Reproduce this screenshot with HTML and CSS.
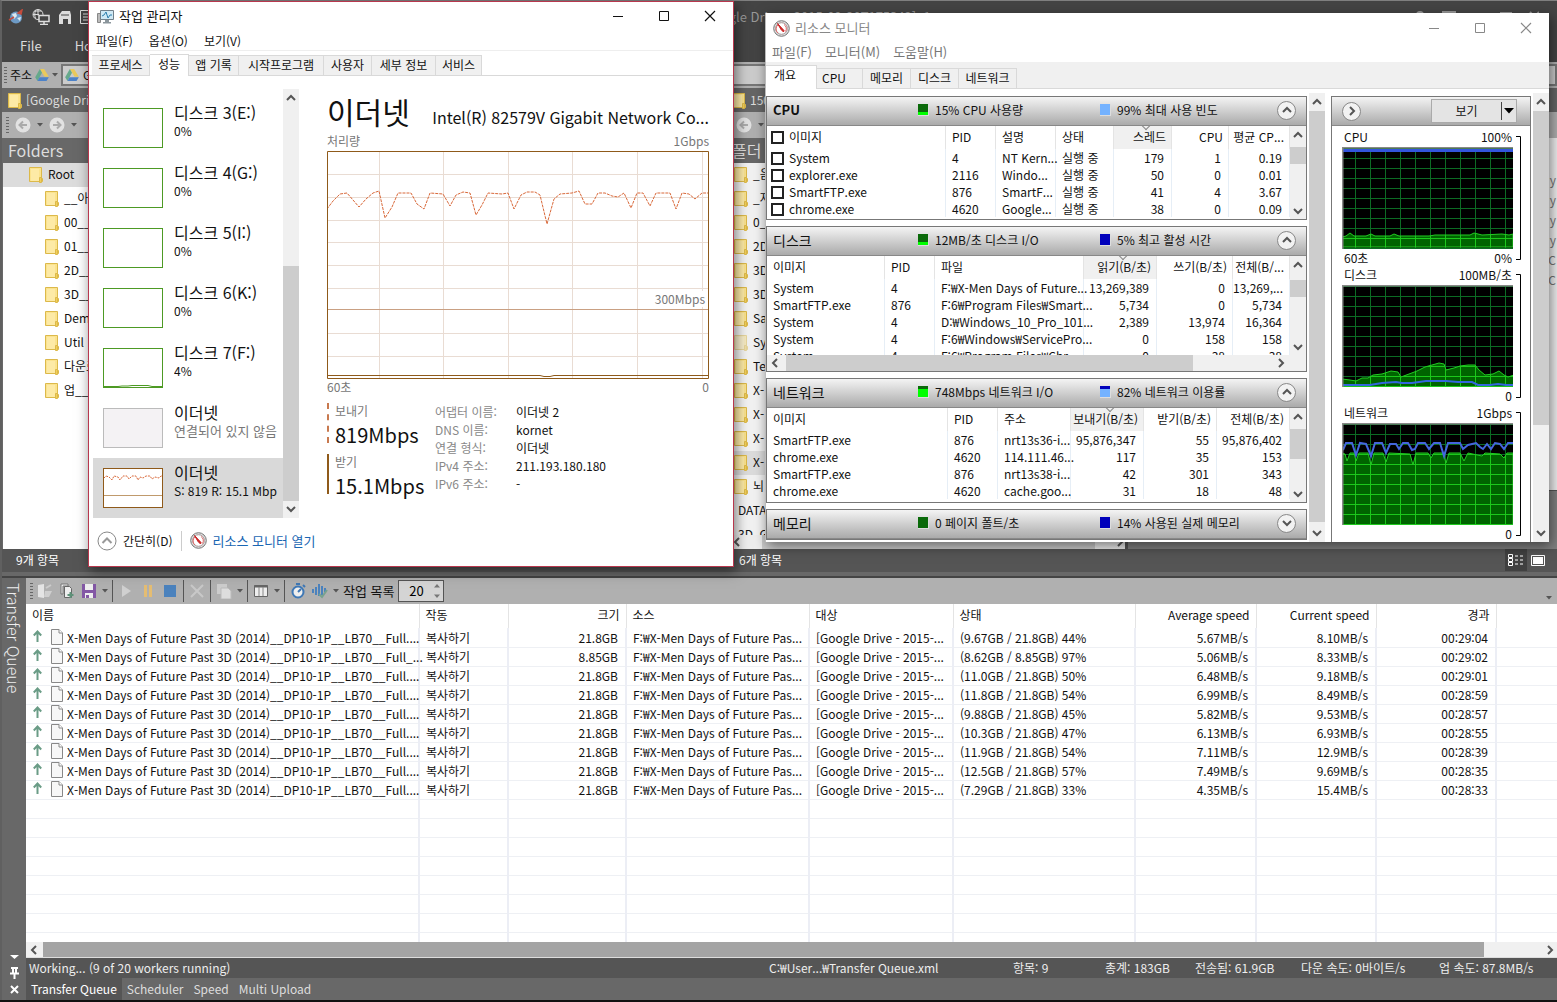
FILE: index.html
```html
<!DOCTYPE html>
<html lang="ko">
<head>
<meta charset="utf-8">
<title>작업 관리자</title>
<link rel="stylesheet" href="styles.css">
</head>
<body>
<svg class="defs" aria-hidden="true">
  <symbol id="folder" viewBox="0 0 14 17"><path d="M.5 1.5h12v11h1v3h-13z" fill="#fbe38e" stroke="#dcb94a"/><path d="M2 3h8v12H2z" fill="#fdeaa6"/><path d="M10.500 11.500h2v5h-2z" fill="#f3cf57" stroke="#dcb94a"/></symbol>
  <symbol id="up" viewBox="0 0 10 10"><path d="M1 7l4-4 4 4" fill="none" stroke="#555" stroke-width="2"/></symbol>
  <symbol id="down" viewBox="0 0 10 10"><path d="M1 3l4 4 4-4" fill="none" stroke="#555" stroke-width="2"/></symbol>
  <symbol id="left" viewBox="0 0 10 10"><path d="M7 1L3 5l4 4" fill="none" stroke="#555" stroke-width="2"/></symbol>
  <symbol id="right" viewBox="0 0 10 10"><path d="M3 1l4 4-4 4" fill="none" stroke="#555" stroke-width="2"/></symbol>
  <symbol id="drop" viewBox="0 0 6 4"><path d="M0 0h6L3 3.500z" fill="#555"/></symbol>
  <symbol id="drive" viewBox="0 0 16 14"><path d="M5.500 0h5L16 9h-5z" fill="#e9c95c"/><path d="M5.500 0L0 9.500 2.700 14 8 4.500z" fill="#66a98b"/><path d="M5 9.500h11L13.300 14H2.700z" fill="#4c82c9"/></symbol>
  <symbol id="back" viewBox="0 0 16 16"><circle cx="8" cy="8" r="7.500" fill="#e2e2e2"/><path d="M12 8H4.500M8 4.500L4.500 8 8 11.500" fill="none" stroke="#aaa" stroke-width="2"/></symbol>
  <symbol id="forward" viewBox="0 0 16 16"><circle cx="8" cy="8" r="7.500" fill="#e2e2e2"/><path d="M4 8h7.500M8 4.500L11.500 8 8 11.500" fill="none" stroke="#aaa" stroke-width="2"/></symbol>
  <symbol id="gauge" viewBox="0 0 17 17"><circle cx="8.500" cy="8.500" r="7.800" fill="#ddd" stroke="#777"/><circle cx="8.500" cy="8.500" r="5.800" fill="#fff" stroke="#a99"/><path d="M5 13a5 5 0 0 1 0-8M11 4.500a5 5 0 0 1 1.500 7" fill="none" stroke="#d66" stroke-width="1"/><path d="M4.500 3.500l3.500 6 2.500 2.500.5-1.500z" fill="#c22" stroke="#c22"/></symbol>
  <symbol id="sent" viewBox="0 0 9 12"><path d="M4.500 12V2M.8 5.500l3.700-4 3.700 4" fill="none" stroke="#6a9c86" stroke-width="2"/></symbol>
  <symbol id="file" viewBox="0 0 12 16"><path d="M.5.5h7.500l3.500 3.500v11.500h-11z" fill="#f7f7f7" stroke="#888"/><path d="M8 .5V4h3.500" fill="#fff" stroke="#888"/></symbol>
  <symbol id="min" viewBox="0 0 12 12"><path d="M1 6.500h10" stroke="currentColor"/></symbol>
  <symbol id="max" viewBox="0 0 12 12"><path d="M1.500 1.500h9v9h-9z" fill="none" stroke="currentColor"/></symbol>
  <symbol id="close" viewBox="0 0 12 12"><path d="M1 1l10 10M11 1L1 11" stroke="currentColor" stroke-width="1.200"/></symbol>
  <symbol id="bracket" viewBox="0 0 6 124" preserveAspectRatio="none"><path d="M0 .5h4.500v123H0" fill="none" stroke="#000"/></symbol>
  <pattern id="grid" width="15" height="10" patternUnits="userSpaceOnUse" x="13" y="1"><path d="M.5 0v10M0 .5h15" stroke="#0c6c24"/></pattern>
  <pattern id="brightgrid" width="15" height="10" patternUnits="userSpaceOnUse" x="13" y="1"><rect width="15" height="10" fill="#006400"/><path d="M.5 0v10M0 .5h15" stroke="#1cc81c"/></pattern>
</svg>

<div class="desktop">
  <main class="app">
    <header class="app-top">
      <div class="app-title">
        <svg width="16" height="16" viewBox="0 0 16 16"><circle cx="8" cy="8.500" r="6" fill="#6d9ac5"/><path d="M4 5l4-1 1 3-3 3zM9 9l4-1-1 4z" fill="#dce8ef"/><path d="M1 11L6 8M10 4l4-3-1 4z" stroke="#c54b3c" stroke-width="1.500" fill="#c54b3c"/></svg>
        <svg width="18" height="16" viewBox="0 0 18 16" fill="none" stroke="#ddd"><circle cx="6" cy="5.500" r="5"/><path d="M6 .5v6M1 5.500h6M2.500 2h7M3.500 1.500c-1 3-1 5 0 8"/><path d="M7 6.500h10v6H7zM12 12v3M8 15.500h8" fill="#444" stroke-width="1.500"/></svg>
        <svg width="14" height="14" viewBox="0 0 14 14"><path d="M1 5l3-4h8l1 4v9h-3V9H5v5H1z" fill="#ddd"/><path d="M3 5h8M6 11h3M6 13h3" stroke="#444"/></svg>
        <svg width="12" height="14" viewBox="0 0 12 14" fill="none" stroke="#ddd"><path d="M.5.500h11v13H.5zM3 4h6M3 7h6M3 10h6"/></svg>
        <span class="app-name">Google Drive - 2015-09-20T175342]_1</span>
        <svg class="app-caption" width="124" height="12" viewBox="0 0 124 12" fill="none" stroke="#999" stroke-width="2"><path d="M2 4c0-4 6-4 6 0 0 2-3 2-3 5M28 1h12v10H28zM28 4h12M86 2h10v9H86zM86 3h10M115 1l9 10M124 1l-9 10"/></svg>
      </div>
      <nav class="ribbon-tabs"><a href="#">File</a><a href="#">Home</a></nav>
    </header>
    <div class="address-bar">
      <span class="grip"></span><span>주소</span>
      <svg width="14" height="12"><use href="#drive"/></svg><svg width="6" height="4"><use href="#drop"/></svg>
      <span class="address-box"><svg width="14" height="12"><use href="#drive"/></svg> Google Drive</span>
    </div>
    <div class="panes">
      <section class="pane pane-left">
        <div class="pane-tab"><svg width="14" height="17"><use href="#folder"/></svg>[Google Drive - 2015]</div>
        <div class="pane-tools"><span class="grip"></span><svg width="16" height="16"><use href="#back"/></svg><svg width="6" height="4"><use href="#drop"/></svg><svg width="16" height="16"><use href="#forward"/></svg><svg width="6" height="4"><use href="#drop"/></svg></div>
        <h2 class="pane-head">Folders</h2>
        <ul class="tree">
          <li class="root selected"><svg width="14" height="17"><use href="#folder"/></svg>Root</li>
          <li><svg width="14" height="17"><use href="#folder"/></svg>__아카이브</li>
          <li><svg width="14" height="17"><use href="#folder"/></svg>00__</li>
          <li><svg width="14" height="17"><use href="#folder"/></svg>01__</li>
          <li><svg width="14" height="17"><use href="#folder"/></svg>2D__</li>
          <li><svg width="14" height="17"><use href="#folder"/></svg>3D__</li>
          <li><svg width="14" height="17"><use href="#folder"/></svg>Demo</li>
          <li><svg width="14" height="17"><use href="#folder"/></svg>Util</li>
          <li><svg width="14" height="17"><use href="#folder"/></svg>다운로드</li>
          <li><svg width="14" height="17"><use href="#folder"/></svg>업__로드</li>
        </ul>
        <div class="pane-status">9개 항목</div>
      </section>
      <section class="pane pane-right">
        <div class="pane-tab"><svg width="14" height="17"><use href="#folder"/></svg>150920</div>
        <div class="pane-tools"><svg width="16" height="16"><use href="#back"/></svg><svg width="6" height="4"><use href="#drop"/></svg></div>
        <div class="split">
          <div class="split-tree">
            <h2 class="pane-head">폴더</h2>
            <ul class="tree">
              <li><svg width="14" height="17"><use href="#folder"/></svg>_음악</li>
              <li><svg width="14" height="17"><use href="#folder"/></svg>_자료</li>
              <li><svg width="14" height="17"><use href="#folder"/></svg>0_</li>
              <li><svg width="14" height="17"><use href="#folder"/></svg>2D</li>
              <li><svg width="14" height="17"><use href="#folder"/></svg>3D</li>
              <li><svg width="14" height="17"><use href="#folder"/></svg>3D</li>
              <li><svg width="14" height="17"><use href="#folder"/></svg>Sa</li>
              <li class="dim"><svg width="14" height="17"><use href="#folder"/></svg>Sy</li>
              <li><svg width="14" height="17"><use href="#folder"/></svg>Te</li>
              <li><svg width="14" height="17"><use href="#folder"/></svg>X-</li>
              <li><svg width="14" height="17"><use href="#folder"/></svg>X-</li>
              <li><svg width="14" height="17"><use href="#folder"/></svg>X-</li>
              <li class="selected"><svg width="14" height="17"><use href="#folder"/></svg>X-</li>
              <li><svg width="14" height="17"><use href="#folder"/></svg>뇌</li>
              <li class="bare">DATA</li>
              <li class="bare">3D_G</li>
            </ul>
            <div class="tree-scroll"><svg width="10" height="10"><use href="#left"/></svg><span class="tree-thumb"></span><svg width="10" height="10"><use href="#right"/></svg></div>
          </div>
          <div class="split-list">
            <ul><li>y</li><li>y</li><li>y</li><li>y</li><li>C</li><li>C</li></ul>
          </div>
        </div>
        <div class="pane-status">6개 항목
          <span class="views"><svg class="view-on" width="22" height="22" viewBox="0 0 22 22" fill="none" stroke="#fff"><path d="M3.500 5.500h4v3h-4zM3.500 9.500h4v3h-4zM3.500 13.500h4v3h-4zM10 7h3M15 7h3M10 11h3M15 11h3M10 15h3M15 15h3"/></svg><svg width="22" height="22" viewBox="0 0 22 22"><path d="M4.500 6.500h13v10h-13z" fill="none" stroke="#fff"/><path d="M6 8h10v7H6z" fill="#fff"/></svg></span>
        </div>
      </section>
    </div>

    <section class="queue">
      <aside class="queue-side">
        <span class="queue-name">Transfer Queue</span>
        <svg width="12" height="42" viewBox="0 0 12 42"><path d="M2 1h9L6.500 5z" fill="#fff"/><path d="M3 14h7M5 14v5M8 14v5M2 19.500h9M6.500 19v6" stroke="#fff" stroke-width="2" fill="none"/><path d="M3 32l7 7M10 32l-7 7" stroke="#fff" stroke-width="2"/></svg>
      </aside>
      <div class="queue-body">
        <div class="queue-tools">
          <span class="grip"></span>
          <button aria-label="열기"><svg width="16" height="16" viewBox="0 0 16 16"><path d="M1 2l6-1v14l-6-1z" fill="#e4e4e4"/><path d="M8 8h7l-3 6H7z" fill="#cfcfcf"/><path d="M9 5l5-3" stroke="#ccc" stroke-width="2"/></svg></button>
          <button aria-label="추가"><svg width="16" height="16" viewBox="0 0 16 16"><path d="M2 1h7v2H4v8H2z" fill="#eee" stroke="#777"/><path d="M5.500 3.500h5l2 2v9h-7z" fill="#eee" stroke="#666"/><path d="M11.500 9v6M8.500 12h6" stroke="#5e9279" stroke-width="2"/></svg></button>
          <button aria-label="저장"><svg width="16" height="16" viewBox="0 0 16 16"><path d="M1 1h14v14H1z" fill="#8358a5"/><path d="M4 1h8v6H4zM4 10h8v5H4z" fill="#eee"/><path d="M5 12h3v3H5z" fill="#8358a5"/></svg></button>
          <button class="tiny" aria-label="저장 옵션"><svg width="6" height="4"><use href="#drop"/></svg></button>
          <i class="sep"></i>
          <button aria-label="시작"><svg width="16" height="16" viewBox="0 0 16 16"><path d="M4 2l9 6-9 6z" fill="#d0d0d0"/></svg></button>
          <button aria-label="일시 중지"><svg width="16" height="16" viewBox="0 0 16 16"><path d="M4 2h3v12H4zM9 2h3v12H9z" fill="#e5bd72"/></svg></button>
          <button aria-label="중지"><svg width="16" height="16" viewBox="0 0 16 16"><path d="M2 2h12v12H2z" fill="#4b82bd"/></svg></button>
          <i class="sep"></i>
          <button aria-label="삭제"><svg width="16" height="16" viewBox="0 0 16 16"><path d="M2 2l12 12M14 2L2 14" stroke="#c8c8c8" stroke-width="2"/></svg></button>
          <i class="sep"></i>
          <button aria-label="복사"><svg width="16" height="16" viewBox="0 0 16 16"><path d="M1 1h10v10H1z" fill="#ccc"/><path d="M5 5h7l3 3v8H5z" fill="#ddd" stroke="#bbb"/></svg></button>
          <button class="tiny" aria-label="복사 옵션"><svg width="6" height="4"><use href="#drop"/></svg></button>
          <i class="sep"></i>
          <button aria-label="열"><svg width="16" height="16" viewBox="0 0 16 16"><path d="M1.500 2.500h13v11h-13z" fill="#eee" stroke="#666"/><path d="M1 3.500h14" stroke="#666" stroke-width="2"/><path d="M6 4v9M10 4v9" stroke="#888"/></svg></button>
          <button class="tiny" aria-label="열 옵션"><svg width="6" height="4"><use href="#drop"/></svg></button>
          <i class="sep"></i>
          <button aria-label="속도"><svg width="16" height="16" viewBox="0 0 16 16"><circle cx="8" cy="9" r="5.500" fill="#eee" stroke="#3f78b5" stroke-width="2"/><path d="M8 9l3-3M6 1h4M13 2l2 2" stroke="#3f78b5" stroke-width="2"/></svg></button>
          <button aria-label="작업"><svg width="16" height="16" viewBox="0 0 16 16"><path d="M1 6v4M4 4v8M7 1v12M10 3v9M13 5v4" stroke="#4b82bd" stroke-width="2"/><path d="M7 11l3 3 5-7" fill="none" stroke="#77a28e" stroke-width="2"/></svg></button>
          <button class="tiny" aria-label="작업 옵션"><svg width="6" height="4"><use href="#drop"/></svg></button>
          <label for="workers">작업 목록</label>
          <span class="spin"><input id="workers" type="text" value="20"><svg width="8" height="14" viewBox="0 0 8 14"><path d="M1 3.500h6L4 0zM1 10.500h6L4 14z" fill="#777"/></svg></span>
          <svg class="tools-more" width="6" height="4"><use href="#drop"/></svg>
        </div>
        <div class="queue-list">
          <table class="queue-table">
            <colgroup><col class="q1"><col class="q2"><col class="q3"><col class="q4"><col class="q5"><col class="q6"><col class="q7"><col class="q8"><col class="q8"><col></colgroup>
            <thead><tr><th>이름</th><th>작동</th><th class="num">크기</th><th>소스</th><th>대상</th><th>상태</th><th class="num">Average speed</th><th class="num">Current speed</th><th class="num">경과</th><th></th></tr></thead>
            <tbody>
              <tr><td><svg class="sent" width="9" height="12"><use href="#sent"/></svg><svg class="file" width="12" height="16"><use href="#file"/></svg>X-Men Days of Future Past 3D (2014)__DP10-1P__LB70__Full....</td><td>복사하기</td><td class="num">21.8GB</td><td>F:₩X-Men Days of Future Pas...</td><td>[Google Drive - 2015-...</td><td>(9.67GB / 21.8GB) 44%</td><td class="num">5.67MB/s</td><td class="num">8.10MB/s</td><td class="num">00:29:04</td><td></td></tr>
              <tr><td><svg class="sent" width="9" height="12"><use href="#sent"/></svg><svg class="file" width="12" height="16"><use href="#file"/></svg>X-Men Days of Future Past 3D (2014)__DP10-1P__LB70__Full_...</td><td>복사하기</td><td class="num">8.85GB</td><td>F:₩X-Men Days of Future Pas...</td><td>[Google Drive - 2015-...</td><td>(8.62GB / 8.85GB) 97%</td><td class="num">5.06MB/s</td><td class="num">8.33MB/s</td><td class="num">00:29:02</td><td></td></tr>
              <tr><td><svg class="sent" width="9" height="12"><use href="#sent"/></svg><svg class="file" width="12" height="16"><use href="#file"/></svg>X-Men Days of Future Past 3D (2014)__DP10-1P__LB70__Full....</td><td>복사하기</td><td class="num">21.8GB</td><td>F:₩X-Men Days of Future Pas...</td><td>[Google Drive - 2015-...</td><td>(11.0GB / 21.8GB) 50%</td><td class="num">6.48MB/s</td><td class="num">9.18MB/s</td><td class="num">00:29:01</td><td></td></tr>
              <tr><td><svg class="sent" width="9" height="12"><use href="#sent"/></svg><svg class="file" width="12" height="16"><use href="#file"/></svg>X-Men Days of Future Past 3D (2014)__DP10-1P__LB70__Full....</td><td>복사하기</td><td class="num">21.8GB</td><td>F:₩X-Men Days of Future Pas...</td><td>[Google Drive - 2015-...</td><td>(11.8GB / 21.8GB) 54%</td><td class="num">6.99MB/s</td><td class="num">8.49MB/s</td><td class="num">00:28:59</td><td></td></tr>
              <tr><td><svg class="sent" width="9" height="12"><use href="#sent"/></svg><svg class="file" width="12" height="16"><use href="#file"/></svg>X-Men Days of Future Past 3D (2014)__DP10-1P__LB70__Full....</td><td>복사하기</td><td class="num">21.8GB</td><td>F:₩X-Men Days of Future Pas...</td><td>[Google Drive - 2015-...</td><td>(9.88GB / 21.8GB) 45%</td><td class="num">5.82MB/s</td><td class="num">9.53MB/s</td><td class="num">00:28:57</td><td></td></tr>
              <tr><td><svg class="sent" width="9" height="12"><use href="#sent"/></svg><svg class="file" width="12" height="16"><use href="#file"/></svg>X-Men Days of Future Past 3D (2014)__DP10-1P__LB70__Full....</td><td>복사하기</td><td class="num">21.8GB</td><td>F:₩X-Men Days of Future Pas...</td><td>[Google Drive - 2015-...</td><td>(10.3GB / 21.8GB) 47%</td><td class="num">6.13MB/s</td><td class="num">6.93MB/s</td><td class="num">00:28:55</td><td></td></tr>
              <tr><td><svg class="sent" width="9" height="12"><use href="#sent"/></svg><svg class="file" width="12" height="16"><use href="#file"/></svg>X-Men Days of Future Past 3D (2014)__DP10-1P__LB70__Full....</td><td>복사하기</td><td class="num">21.8GB</td><td>F:₩X-Men Days of Future Pas...</td><td>[Google Drive - 2015-...</td><td>(11.9GB / 21.8GB) 54%</td><td class="num">7.11MB/s</td><td class="num">12.9MB/s</td><td class="num">00:28:39</td><td></td></tr>
              <tr><td><svg class="sent" width="9" height="12"><use href="#sent"/></svg><svg class="file" width="12" height="16"><use href="#file"/></svg>X-Men Days of Future Past 3D (2014)__DP10-1P__LB70__Full....</td><td>복사하기</td><td class="num">21.8GB</td><td>F:₩X-Men Days of Future Pas...</td><td>[Google Drive - 2015-...</td><td>(12.5GB / 21.8GB) 57%</td><td class="num">7.49MB/s</td><td class="num">9.69MB/s</td><td class="num">00:28:35</td><td></td></tr>
              <tr><td><svg class="sent" width="9" height="12"><use href="#sent"/></svg><svg class="file" width="12" height="16"><use href="#file"/></svg>X-Men Days of Future Past 3D (2014)__DP10-1P__LB70__Full....</td><td>복사하기</td><td class="num">21.8GB</td><td>F:₩X-Men Days of Future Pas...</td><td>[Google Drive - 2015-...</td><td>(7.29GB / 21.8GB) 33%</td><td class="num">4.35MB/s</td><td class="num">15.4MB/s</td><td class="num">00:28:33</td><td></td></tr>
              <tr><td></td><td></td><td></td><td></td><td></td><td></td><td></td><td></td><td></td><td></td></tr>
              <tr><td></td><td></td><td></td><td></td><td></td><td></td><td></td><td></td><td></td><td></td></tr>
              <tr><td></td><td></td><td></td><td></td><td></td><td></td><td></td><td></td><td></td><td></td></tr>
              <tr><td></td><td></td><td></td><td></td><td></td><td></td><td></td><td></td><td></td><td></td></tr>
              <tr><td></td><td></td><td></td><td></td><td></td><td></td><td></td><td></td><td></td><td></td></tr>
              <tr><td></td><td></td><td></td><td></td><td></td><td></td><td></td><td></td><td></td><td></td></tr>
              <tr><td></td><td></td><td></td><td></td><td></td><td></td><td></td><td></td><td></td><td></td></tr>
              <tr><td></td><td></td><td></td><td></td><td></td><td></td><td></td><td></td><td></td><td></td></tr>
            </tbody>
          </table>
        </div>
        <div class="queue-scroll"><svg width="10" height="10"><use href="#left"/></svg><span class="queue-thumb"></span><svg width="10" height="10"><use href="#right"/></svg></div>
        <div class="queue-status"><span class="s1">Working... (9 of 20 workers running)</span><span class="s2">C:₩User...₩Transfer Queue.xml</span><span class="s3">항목: 9</span><span class="s4">총계: 183GB</span><span class="s5">전송됨: 61.9GB</span><span class="s6">다운 속도: 0바이트/s</span><span class="s7">업 속도: 87.8MB/s</span></div>
        <nav class="queue-tabs"><a class="on" href="#">Transfer Queue</a><a href="#">Scheduler</a><a href="#">Speed</a><a href="#">Multi Upload</a></nav>
      </div>
    </section>
  </main>

  <section class="window taskman">
    <header class="caption">
      <svg width="17" height="15" viewBox="0 0 17 15"><path d="M.5 4.500h3v9h-3z" fill="#bbb" stroke="#888"/><path d="M3.500 1.500h13v9h-13z" fill="#cfe9f5" stroke="#71808a"/><path d="M5 7l2-1 2-3 2 6 2-3h2" fill="none" stroke="#2b7fae"/><path d="M8 11h4v2h2v1.500H6V13h2z" fill="#8b969c"/></svg>
      <h1>작업 관리자</h1>
      <div class="controls"><button aria-label="최소화"><svg width="12" height="12"><use href="#min"/></svg></button><button aria-label="최대화"><svg width="12" height="12"><use href="#max"/></svg></button><button aria-label="닫기"><svg width="12" height="12"><use href="#close"/></svg></button></div>
    </header>
    <nav class="menu"><a href="#">파일(F)</a><a href="#">옵션(O)</a><a href="#">보기(V)</a></nav>
    <nav class="tabs"><a class="t1" href="#">프로세스</a><a class="t2 on" href="#">성능</a><a class="t3" href="#">앱 기록</a><a class="t4" href="#">시작프로그램</a><a class="t5" href="#">사용자</a><a class="t6" href="#">세부 정보</a><a class="t7" href="#">서비스</a></nav>
    <div class="tm-body">
      <ul class="devices">
        <li><span class="thumb"></span><div><b>디스크 3(E:)</b>0%</div></li>
        <li><span class="thumb"></span><div><b>디스크 4(G:)</b>0%</div></li>
        <li><span class="thumb"></span><div><b>디스크 5(I:)</b>0%</div></li>
        <li><span class="thumb"></span><div><b>디스크 6(K:)</b>0%</div></li>
        <li><span class="thumb"><svg width="58" height="38" viewBox="0 0 58 38"><path d="M0 37.500h14l4-.5h6l4-.500h16l4 1h10" fill="none" stroke="#4d9a24"/></svg></span><div><b>디스크 7(F:)</b>4%</div></li>
        <li class="off"><span class="thumb"></span><div><b>이더넷</b>연결되어 있지 않음</div></li>
        <li class="selected net"><span class="thumb"><svg width="58" height="38" viewBox="0 0 58 38" fill="none"><path d="M0 9l2-2 3 1 3 3 2-4 4 1 2 3 3-4h4l2 3 3-3h4l2 4 2-3 3 1 3-2h4l2 3 3-2 4 1 2-2h1" stroke="#d9693a" stroke-dasharray="2 1"/><path d="M0 26.500h58" stroke="#c09a6c"/></svg></span><div><b>이더넷</b>S: 819 R: 15.1 Mbp</div></li>
      </ul>
      <div class="vscroll"><svg width="10" height="10"><use href="#up"/></svg><span class="vthumb"></span><svg width="10" height="10"><use href="#down"/></svg></div>
      <div class="detail">
        <div class="detail-head"><h2>이더넷</h2><span>Intel(R) 82579V Gigabit Network Co...</span></div>
        <div class="axis"><span>처리량</span><span>1Gbps</span></div>
        <div class="plot">
          <svg viewBox="0 0 382 228" width="100%" height="228" preserveAspectRatio="none" fill="none">
            <path d="M52.500 0v228M116.500 0v228M181.500 0v228M245.500 0v228M310.500 0v228M375.500 0v228M0 23.500h382M0 46.500h382M0 69.500h382M0 91.500h382M0 114.500h382M0 137.500h382M0 182.500h382M0 205.500h382" stroke="#e9dcd3"/>
            <path d="M0 158.500h382" stroke="#c9a083"/>
            <path d="M0 224.500h213l4 1h6l4-1h155" stroke="#8f5a1a"/>
            <path d="M0 58L6 50 13 43 20 42 26 49 32 56 39 48 46 42 52 40 58 67 65 56 71 42 84 42 90 53 97 58 103 42 116 43 123 55 129 44 136 41 143 42 149 64 155 54 161 42 175 43 181 42 187 58 194 44 200 41 208 41 213 44 220 73 227 48 233 43 245 42 252 40 258 53 265 53 271 42 278 42 285 45 291 46 297 42 304 57 310 42 316 42 323 55 329 42 343 42 349 58 355 42 362 43 368 48 375 42 382 42" stroke="#d9693a" stroke-dasharray="3 1"/>
            <path d="M.5.500h381v227H.5z" stroke="#8f5a1a"/>
          </svg>
          <span class="plot-mark">300Mbps</span>
        </div>
        <div class="axis"><span>60초</span><span>0</span></div>
        <div class="facts">
          <div class="rates">
            <div class="rate send"><span>보내기</span><strong>819Mbps</strong></div>
            <div class="rate"><span>받기</span><strong>15.1Mbps</strong></div>
          </div>
          <dl><dt>어댑터 이름:</dt><dd>이더넷 2</dd><dt>DNS 이름:</dt><dd>kornet</dd><dt>연결 형식:</dt><dd>이더넷</dd><dt>IPv4 주소:</dt><dd>211.193.180.180</dd><dt>IPv6 주소:</dt><dd>-</dd></dl>
        </div>
      </div>
    </div>
    <footer class="tm-foot">
      <button><svg width="20" height="20" viewBox="0 0 20 20" fill="none"><circle cx="10" cy="10" r="9" stroke="#888"/><path d="M5.500 12L10 7.500l4.500 4.500" stroke="#999" stroke-width="2"/></svg>간단히(D)</button>
      <a href="#"><svg width="17" height="17"><use href="#gauge"/></svg>리소스 모니터 열기</a>
    </footer>
  </section>

  <section class="window resmon">
    <header class="caption">
      <svg width="17" height="17"><use href="#gauge"/></svg>
      <h1>리소스 모니터</h1>
      <div class="controls"><button aria-label="최소화"><svg width="12" height="12"><use href="#min"/></svg></button><button aria-label="최대화"><svg width="12" height="12"><use href="#max"/></svg></button><button aria-label="닫기"><svg width="12" height="12"><use href="#close"/></svg></button></div>
    </header>
    <nav class="menu"><a href="#">파일(F)</a><a href="#">모니터(M)</a><a href="#">도움말(H)</a></nav>
    <nav class="tabs"><a class="r1 on" href="#">개요</a><a class="r2" href="#">CPU</a><a class="r3" href="#">메모리</a><a class="r3" href="#">디스크</a><a class="r4" href="#">네트워크</a></nav>
    <div class="rm-body">
      <div class="rm-panels">
        <section class="panel">
          <header><h2 class="latin">CPU</h2><span class="m1"><i class="sw green"></i>15% CPU 사용량</span><span class="m2"><i class="sw sky"></i>99% 최대 사용 빈도</span><button class="round" aria-label="접기"><svg width="10" height="10"><use href="#up"/></svg></button></header>
          <div class="grid-box">
            <table>
              <colgroup><col><col class="w50"><col class="w60"><col class="w58"><col class="w58"><col class="w57"><col class="w61"></colgroup>
              <thead><tr><th><input type="checkbox" aria-label="모두 선택">이미지</th><th>PID</th><th>설명</th><th>상태</th><th class="num sorted">스레드</th><th class="num">CPU</th><th class="num">평균 CP...</th></tr></thead>
              <tbody>
                <tr><td><label><input type="checkbox">System</label></td><td>4</td><td>NT Kern...</td><td>실행 중</td><td class="num">179</td><td class="num">1</td><td class="num">0.19</td></tr>
                <tr><td><label><input type="checkbox">explorer.exe</label></td><td>2116</td><td>Windo...</td><td>실행 중</td><td class="num">50</td><td class="num">0</td><td class="num">0.01</td></tr>
                <tr><td><label><input type="checkbox">SmartFTP.exe</label></td><td>876</td><td>SmartF...</td><td>실행 중</td><td class="num">41</td><td class="num">4</td><td class="num">3.67</td></tr>
                <tr><td><label><input type="checkbox">chrome.exe</label></td><td>4620</td><td>Google...</td><td>실행 중</td><td class="num">38</td><td class="num">0</td><td class="num">0.09</td></tr>
              </tbody>
            </table>
            <div class="vscroll small"><svg width="10" height="10"><use href="#up"/></svg><span class="vthumb"></span><svg width="10" height="10"><use href="#down"/></svg></div>
          </div>
        </section>
        <section class="panel">
          <header><h2>디스크</h2><span class="m1"><i class="sw green"></i>12MB/초 디스크 I/O</span><span class="m2"><i class="sw navy"></i>5% 최고 활성 시간</span><button class="round" aria-label="접기"><svg width="10" height="10"><use href="#up"/></svg></button></header>
          <div class="grid-box disk">
            <table>
              <colgroup><col><col class="w50"><col class="w149"><col class="w73"><col class="w76"><col class="w57"></colgroup>
              <thead><tr><th>이미지</th><th>PID</th><th>파일</th><th class="num sorted">읽기(B/초)</th><th class="num">쓰기(B/초)</th><th class="num">전체(B/...</th></tr></thead>
              <tbody>
                <tr><td>System</td><td>4</td><td>F:₩X-Men Days of Future...</td><td class="num">13,269,389</td><td class="num">0</td><td class="num">13,269,...</td></tr>
                <tr><td>SmartFTP.exe</td><td>876</td><td>F:6₩Program Files₩Smart...</td><td class="num">5,734</td><td class="num">0</td><td class="num">5,734</td></tr>
                <tr><td>System</td><td>4</td><td>D:₩Windows_10_Pro_101...</td><td class="num">2,389</td><td class="num">13,974</td><td class="num">16,364</td></tr>
                <tr><td>System</td><td>4</td><td>F:6₩Windows₩ServicePro...</td><td class="num">0</td><td class="num">158</td><td class="num">158</td></tr>
                <tr><td>System</td><td>4</td><td>F:6₩Program Files₩Chr...</td><td class="num">0</td><td class="num">38</td><td class="num">38</td></tr>
              </tbody>
            </table>
            <div class="vscroll small"><svg width="10" height="10"><use href="#up"/></svg><span class="vthumb"></span><svg width="10" height="10"><use href="#down"/></svg></div>
          </div>
          <div class="hscroll"><svg width="10" height="10"><use href="#left"/></svg><span class="hthumb"></span><svg width="10" height="10"><use href="#right"/></svg></div>
        </section>
        <section class="panel">
          <header><h2>네트워크</h2><span class="m1"><i class="sw lime"></i>748Mbps 네트워크 I/O</span><span class="m2"><i class="sw skyhigh"></i>82% 네트워크 이용률</span><button class="round" aria-label="접기"><svg width="10" height="10"><use href="#up"/></svg></button></header>
          <div class="grid-box net">
            <table>
              <colgroup><col><col class="w50"><col class="w73"><col class="w73"><col class="w73"><col class="w73"></colgroup>
              <thead><tr><th>이미지</th><th>PID</th><th>주소</th><th class="num sorted">보내기(B/초)</th><th class="num">받기(B/초)</th><th class="num">전체(B/초)</th></tr></thead>
              <tbody>
                <tr><td>SmartFTP.exe</td><td>876</td><td>nrt13s36-i...</td><td class="num">95,876,347</td><td class="num">55</td><td class="num">95,876,402</td></tr>
                <tr><td>chrome.exe</td><td>4620</td><td>114.111.46...</td><td class="num">117</td><td class="num">35</td><td class="num">153</td></tr>
                <tr><td>SmartFTP.exe</td><td>876</td><td>nrt13s38-i...</td><td class="num">42</td><td class="num">301</td><td class="num">343</td></tr>
                <tr><td>chrome.exe</td><td>4620</td><td>cache.goo...</td><td class="num">31</td><td class="num">18</td><td class="num">48</td></tr>
              </tbody>
            </table>
            <div class="vscroll small tall"><svg width="10" height="10"><use href="#up"/></svg><span class="vthumb"></span><svg width="10" height="10"><use href="#down"/></svg></div>
          </div>
        </section>
        <section class="panel folded">
          <header><h2>메모리</h2><span class="m1"><i class="sw dark"></i>0 페이지 폴트/초</span><span class="m2"><i class="sw navy"></i>14% 사용된 실제 메모리</span><button class="round" aria-label="펼치기"><svg width="10" height="10"><use href="#down"/></svg></button></header>
        </section>
      </div>
      <div class="vscroll edge long"><svg width="10" height="10"><use href="#up"/></svg><span class="vthumb"></span><svg width="10" height="10"><use href="#down"/></svg></div>
      <div class="charts">
        <header><button class="round" aria-label="숨기기"><svg width="10" height="10"><use href="#right"/></svg></button><button class="view-btn"><span>보기</span><svg width="10" height="6" viewBox="0 0 10 6"><path d="M0 0h10L5 5.500z" fill="#000"/></svg></button></header>
        <figure>
          <figcaption><span>CPU</span><span>100%</span></figcaption>
          <svg class="graph" width="171" height="102" viewBox="0 0 171 102"><path d="M0 0h171v102H0z" fill="#000"/><path d="M0 0h171v102H0z" fill="url(#grid)"/><path d="M0 90l4-1 4-3 4 3h12l5-2 4 2h15l4-2 5 2h30l6-1h35l4-2 8 2 20-1 7 1 4-1v13H0z" fill="url(#brightgrid)" stroke="#2c2"/><path d="M0 3.500h171" stroke="#35d" stroke-width="3"/><path d="M.5 102V.500H171" fill="none" stroke="#888" stroke-width="2"/></svg>
          <div class="base"><span>60초</span><span>0%</span></div>
          <svg class="bracket"><use href="#bracket"/></svg>
        </figure>
        <figure>
          <figcaption><span>디스크</span><span>100MB/초</span></figcaption>
          <svg class="graph" width="171" height="102" viewBox="0 0 171 102"><path d="M0 0h171v102H0z" fill="#000"/><path d="M0 0h171v102H0z" fill="url(#grid)"/><path d="M0 94l8 1 6 1 6-3h6l5-3 9-1 9-3 7 1 3 5 8-3 8-3 8-4 7-2 7-2 5 1 2 6 8-2 6-2 8-1h7l4 5 6 5 8-1 6-3 5 4 4 2 6-2v15H0z" fill="url(#brightgrid)" stroke="#2c2"/><path d="M0 100h28l12-2 14-1 6 1h10l14-2h20l12 1h14l6 3h12l8-1 8 1h7" fill="none" stroke="#36d" stroke-width="2"/><path d="M.5 102V.500H171" fill="none" stroke="#888" stroke-width="2"/></svg>
          <div class="base"><span></span><span>0</span></div>
          <svg class="bracket"><use href="#bracket"/></svg>
        </figure>
        <figure>
          <figcaption><span>네트워크</span><span>1Gbps</span></figcaption>
          <svg class="graph" width="171" height="102" viewBox="0 0 171 102"><path d="M0 0h171v102H0z" fill="#000"/><path d="M0 0h171v102H0z" fill="url(#grid)"/><path d="M0 30L3 31 5 38 8 30 12 30 14 38 17 30 26 30 29 42 32 30 41 30 44 39 47 30 68 31 71 42 74 30 86 30 89 35 92 30 101 30 104 40 107 30 118 30 122 38 126 30 140 33 143 30 158 31 162 35 165 30 171 30V102H0z" fill="url(#brightgrid)" stroke="#2c2"/><path d="M1 27L4 20 10 20 14 32 18 20 24 21 29 33 33 20 40 20 44 30 48 21 54 21 57 26 61 20 66 20 70 27 73 26 76 20 83 20 87 26 92 20 98 20 102 33 106 20 118 20 121 26 126 22 134 20 138 24 141 26 145 21 149 26 153 20 158 21 162 26 166 20 171 20" fill="none" stroke="#46d" stroke-width="2"/><path d="M.5 102V.500H171" fill="none" stroke="#888" stroke-width="2"/></svg>
          <div class="base"><span></span><span>0</span></div>
          <svg class="bracket"><use href="#bracket"/></svg>
        </figure>
      </div>
      <div class="vscroll edge wide"><svg width="10" height="10"><use href="#up"/></svg><span class="vthumb"></span><svg width="10" height="10"><use href="#down"/></svg></div>
    </div>
  </section>
</div>
</body>
</html>
```
FILE: styles.css
```css
* { box-sizing: border-box; margin: 0; padding: 0; }
html, body { height: 100%; }
body { font: 12px/16px "Noto Sans CJK KR", "Noto Sans", sans-serif; color: #111; background: #111; overflow: hidden; }
button { font: inherit; color: inherit; border: 0; background: none; display: flex; align-items: center; justify-content: center; }
a { color: inherit; text-decoration: none; white-space: nowrap; }
ul { list-style: none; }
h1, h2 { font-weight: 400; }
svg { flex: none; }
table { border-collapse: collapse; table-layout: fixed; width: 100%; }
th, td { font-weight: 400; text-align: left; white-space: nowrap; overflow: hidden; }
.num { text-align: right; }
.defs { position: absolute; width: 0; height: 0; }
.desktop { position: relative; height: 100%; padding-bottom: 2px; }

/* file transfer application */
.app { height: 100%; display: flex; flex-direction: column; background: #686868; border-left: 2px solid #606060; border-top: 1px solid #808080; }
.app-top { background: #444; height: 61px; }
.app-title { display: flex; align-items: center; gap: 8px; height: 31px; padding: 0 18px 0 6px; color: #999; }
.app-name { margin-left: 604px; font-size: 13px; white-space: nowrap; }
.app-caption { margin-left: auto; }
.ribbon-tabs { display: flex; gap: 33px; padding: 5px 18px; font-size: 13px; line-height: 18px; color: #ddd; }
.address-bar { height: 26px; background: #b0b0b0; display: flex; align-items: center; gap: 3px; padding-left: 2px; white-space: nowrap; }
.grip { width: 3px; height: 16px; background: repeating-linear-gradient(#666 0 1px, #b0b0b0 1px 3px); }
.address-box { display: flex; align-items: center; gap: 4px; border: 2px solid #777; background: #ccc; height: 22px; flex: 1; padding-left: 2px; }
.panes { display: flex; flex: 1; min-height: 0; }
.pane { display: flex; flex-direction: column; min-width: 0; }
.pane-left { flex: 0 0 730px; }
.pane-right { flex: 1; }
.pane-tab { height: 24px; background: #666; color: #ddd; display: flex; align-items: center; gap: 4px; padding-left: 6px; white-space: nowrap; }
.pane-right .pane-tab { padding-left: 0; }
.pane-tools { height: 26px; background: #b0b0b0; display: flex; align-items: center; gap: 6px; padding-left: 4px; }
.pane-head { height: 25px; padding-left: 6px; background: #686868; color: #ddd; font-size: 16px; line-height: 25px; }
.split-tree .pane-head { padding-left: 0; }
.tree { flex: 1; min-height: 0; overflow: hidden; background: #fff; font-size: 12px; margin-left: 1px; }
.tree li { height: 24px; display: flex; align-items: center; gap: 5px; padding: 0 0 2px 42px; white-space: nowrap; }
.tree .root { padding-left: 26px; }
.tree .selected { background: #dcdcdc; }
.tree .dim svg { opacity: .5; }
.split-tree .tree { background: #f2f2f2; }
.split-tree .tree li { padding-left: 1px; }
.split-tree .tree .bare { padding-left: 5px; }
.split { flex: 1; min-height: 0; display: flex; }
.split-tree { flex: 0 0 393px; display: flex; flex-direction: column; }
.split-list { flex: 1; background: linear-gradient(#f0f0f0 352px, #555 352px 353px, #808080 353px); border-left: 3px solid #555; color: #777; padding: 34px 1px 0 0; text-align: right; }
.split-list li { height: 20px; }
.tree-scroll { height: 14px; background: #eee; display: flex; align-items: center; }
.tree-thumb { flex: 1; margin: 0 20px; background: #ccc; height: 14px; }
.pane-status { height: 23px; background: #555; color: #fff; padding: 0 8px 0 14px; line-height: 22px; display: flex; }
.pane-right .pane-status { padding-left: 7px; }
.views { margin-left: auto; display: flex; }
.view-on { background: #404040; }

/* transfer queue */
.queue { height: 424px; display: flex; margin-top: 4px; border-top: 2px solid #444; }
.queue-side { width: 24px; display: flex; flex-direction: column; justify-content: space-between; align-items: center; padding: 5px 0 4px; color: #eee; }
.queue-name { writing-mode: vertical-rl; font-size: 16px; line-height: 20px; font-weight: 300; }
.queue-body { flex: 1; min-width: 0; display: flex; flex-direction: column; }
.queue-tools { height: 26px; background: #b0b0b0; display: flex; align-items: center; padding: 0 5px 1px 4px; }
.queue-tools button { width: 22px; height: 24px; }
.queue-tools .tiny { width: 10px; }
.queue-tools .grip { margin-right: 1px; }
.sep { width: 1px; height: 22px; background: #555; margin: 0 2px; }
.queue-tools label { margin: 0 4px 0 2px; font-size: 13px; white-space: nowrap; }
.spin { display: flex; align-items: center; width: 46px; height: 22px; border: 1px solid #555; background: #d4d4d4; }
.spin input { width: 34px; border: 0; background: none; text-align: center; font: inherit; font-size: 13px; }
.tools-more { margin: 14px 0 0 auto; }
.queue-list { flex: 1; min-height: 0; overflow: hidden; background: #fff; }
.queue-table th { height: 24px; padding: 0 6px 2px; border-right: 1px solid #e4e4e4; }
.queue-table td { height: 19px; line-height: 17px; padding: 0 6px; border-right: 2px solid #eceef5; border-bottom: 1px solid #eef0f4; }
.queue-table td:first-child { overflow: visible; padding-right: 0; }
.queue-table td.num { padding-right: 7px; }
.queue-table th:last-child, .queue-table td:last-child { border-right: 0; }
.sent { margin: 1px 9px 0 1px; vertical-align: top; }
.file { margin: 0 4px 0 0; vertical-align: top; }
.q1 { width: 393px; } .q2 { width: 89px; } .q3 { width: 118px; } .q4 { width: 183px; } .q5 { width: 144px; } .q6 { width: 182px; } .q7 { width: 121px; } .q8 { width: 120px; }
.queue-scroll { height: 15px; background: #f0f0f0; display: flex; align-items: center; gap: 4px; padding: 0 2px 0 3px; }
.queue-thumb { flex: 1; height: 15px; background: #a4a4a4; margin-right: 57px; }
.queue-status { height: 21px; border-top: 1px solid #ddd; background: #555; color: #eee; display: flex; padding: 0 18px 0 3px; line-height: 20px; white-space: nowrap; }
.s1 { width: 740px; } .s2 { flex: 1; } .s3 { width: 92px; } .s4 { width: 90px; } .s5 { width: 106px; } .s6 { width: 138px; } .s7 { width: 100px; }
.queue-tabs { height: 22px; display: flex; color: #ddd; line-height: 22px; }
.queue-tabs a { padding: 0 5px; }
.queue-tabs .on { background: #555; color: #fff; }

/* windows */
.window { position: absolute; background: #fff; display: flex; flex-direction: column; box-shadow: 2px 4px 12px rgba(0, 0, 0, .5); }
.taskman { left: 88px; top: 1px; width: 646px; height: 566px; border: 1px solid #b8384e; }
.resmon { left: 765px; right: 8px; top: 13px; height: 529px; border-left: 1px solid #bbb; }
.caption { display: flex; align-items: center; gap: 5px; height: 28px; padding-left: 8px; }
.caption h1 { font-size: 13px; line-height: 16px; }
.controls { margin-left: auto; display: flex; }
.controls button { width: 46px; height: 28px; }
.menu { display: flex; gap: 16px; height: 21px; padding-left: 7px; line-height: 21px; }
.tabs { display: flex; align-items: flex-end; height: 25px; border-bottom: 1px solid #d9d9d9; }
.tabs a { height: 20px; line-height: 18px; border: 1px solid #d9d9d9; border-left: 0; border-bottom: 0; background: #f0f0f0; text-align: center; }
.tabs .on { background: #fff; height: 22px; margin-bottom: -1px; }
.taskman .menu { border-bottom: 1px solid #eee; }
.taskman .tabs { padding-left: 3px; }
.t1 { width: 58px; } .t2 { width: 39px; } .t3 { width: 50px; } .t4 { width: 85px; } .t5 { width: 48px; } .t6 { width: 64px; } .t7 { width: 46px; }
.tm-body { flex: 1; min-height: 0; display: flex; padding: 13px 24px 0 4px; }
.devices { width: 190px; height: 429px; overflow: hidden; padding-top: 9px; }
.devices li { display: flex; gap: 11px; height: 60px; padding: 10px 0 0 10px; white-space: nowrap; }
.devices div { overflow: hidden; min-width: 0; margin-top: -6px; }
.devices b { display: block; font-weight: 400; font-size: 16px; line-height: 21px; }
.devices .selected { background: #d9d9d9; }
.thumb { flex: none; width: 60px; height: 40px; border: 1px solid #4d9a24; background: #fff; }
.off .thumb { border-color: #bbb; background: #f4f2f4; }
.off div { color: #777; font-size: 13px; }
.off b { color: #111; }
.net .thumb { border-color: #8f5a1a; }
.vscroll { width: 16px; background: #f0f0f0; display: flex; flex-direction: column; align-items: center; justify-content: space-between; padding: 4px 0; }
.vthumb { width: 16px; background: #cdcdcd; }
.taskman .vscroll { height: 429px; }
.taskman .vthumb { height: 235px; margin: 159px 0 0; }
.detail { flex: 1; min-width: 0; margin-left: 28px; }
.detail-head { display: flex; justify-content: space-between; align-items: baseline; height: 44px; white-space: nowrap; }
.detail-head h2 { font-size: 30px; line-height: 44px; }
.detail-head span { font-size: 16px; }
.axis { display: flex; justify-content: space-between; color: #777; line-height: 16px; height: 18px; }
.plot { position: relative; height: 228px; }
.plot svg { display: block; }
.plot-mark { position: absolute; right: 4px; top: 140px; color: #777; background: #fff; line-height: 16px; }
.facts { display: flex; gap: 12px; margin-top: 6px; white-space: nowrap; }
.rates { width: 96px; }
.rate { height: 40px; border-left: 2px solid #8f5a1a; padding-left: 6px; margin-bottom: 11px; color: #777; }
.send { border-left-style: dashed; border-left-color: #c8794f; }
.rate span, .rate strong { display: block; }
.rate strong { font-weight: 400; font-size: 20px; line-height: 32px; color: #111; }
.facts dl { display: grid; grid-template-columns: 81px auto; line-height: 18px; align-content: start; }
.facts dt { color: #888; }
.tm-foot { display: flex; align-items: center; height: 49px; padding: 0 0 2px 8px; }
.tm-foot button, .tm-foot a { display: flex; align-items: center; gap: 6px; }
.tm-foot button { padding-right: 8px; border-right: 1px solid #ccc; line-height: 16px; }
.tm-foot a { padding-left: 8px; color: #1a66b3; font-size: 13px; }

.resmon .caption { color: #888; padding: 2px 0 0 7px; }
.resmon .menu { color: #777; padding-left: 6px; gap: 13px; font-size: 13px; }
.resmon .tabs { height: 27px; background: #f0f0f0; }
.r1 { width: 51px; } .r2 { width: 46px; } .r3 { width: 48px; } .r4 { width: 58px; }
.resmon .r1 { height: 24px; text-align: left; padding-left: 8px; }
.resmon .r2 { text-align: left; padding-left: 5px; }
.rm-body { flex: 1; min-height: 0; display: flex; padding-top: 4px; }
.rm-panels { flex: 1; min-width: 0; padding-top: 3px; display: flex; flex-direction: column; gap: 6px; }
.panel { border: 1px solid #777; }
.panel header, .charts header { height: 29px; display: flex; align-items: center; background: linear-gradient(#f4f4f4, #aaa); border-bottom: 1px solid #888; padding: 0 10px 2px 6px; }
.panel h2 { width: 145px; font-size: 14px; }
.panel .latin { font-weight: 700; font-size: 13px; }
.m1 { width: 182px; } .m2 { flex: 1; }
.m1, .m2 { display: flex; align-items: center; gap: 6px; white-space: nowrap; }
.sw { width: 11px; height: 12px; border: 1px solid #ddd; border-width: 0 1px 1px 0; }
.green { background: linear-gradient(#0a6a0a 70%, #0f0 70%); }
.lime { background: linear-gradient(#0a6a0a 30%, #0f0 30%); }
.dark { background: #0a6a0a; }
.sky { background: #74b2ff; }
.skyhigh { background: linear-gradient(#00b 25%, #74b2ff 25%); }
.navy { background: #00b; }
.round { width: 19px; height: 19px; border: 1px solid #888; border-radius: 50%; background: #f2f2f2; flex: none; }
.grid-box { height: 93px; overflow: hidden; display: flex; }
.grid-box.disk { height: 99px; }
.grid-box.net { height: 94px; }
.grid-box table { flex: 1; min-width: 0; height: 1px; }
.w50 { width: 50px; } .w57 { width: 57px; } .w58 { width: 58px; } .w60 { width: 60px; } .w61 { width: 61px; } .w73 { width: 73px; } .w76 { width: 76px; } .w149 { width: 149px; }
.grid-box th { height: 23px; padding: 0 6px 2px; border-right: 1px solid #e4e4e4; }
.grid-box td { height: 17px; line-height: 17px; padding: 0 0 0 6px; border-right: 1px solid #e6eef6; overflow: visible; }
.grid-box .num { padding-left: 0; }
.grid-box th.num { padding-right: 5px; }
.grid-box td.num { padding-right: 7px; }
.sorted { position: relative; background: #f0f0f0; }
.sorted::before { content: ""; position: absolute; left: 50%; top: -3px; width: 5px; height: 5px; border: solid #888; border-width: 0 1px 1px 0; transform: rotate(45deg); }
.grid-box label { display: block; height: 17px; line-height: 17px; }
input[type="checkbox"] { appearance: none; width: 13px; height: 13px; border: 2px solid #222; background: #fff; margin: 0 5px 0 -2px; vertical-align: -2px; }
.small { padding: 4px 0 3px; }
.small .vthumb { height: 17px; margin-bottom: 36px; }
.tall .vthumb { height: 30px; margin-bottom: 24px; }
.hscroll { height: 16px; background: #f0f0f0; display: flex; align-items: center; gap: 6px; padding: 0 20px 0 3px; }
.hthumb { flex: 1; height: 16px; background: #cdcdcd; margin-right: 77px; }
.edge { margin-left: 2px; }
.long .vthumb { height: 411px; margin-top: 4px; margin-bottom: auto; }
.charts { width: 200px; margin: 3px 0 0 6px; border: 1px solid #777; border-bottom: 0; overflow: hidden; }
.charts header { justify-content: space-between; padding: 0 13px 0 10px; }
.view-btn { width: 86px; height: 24px; border: 1px solid #aaa; background: #e4e4e4; }
.view-btn span { flex: 1; text-align: center; border-right: 1px solid #444; line-height: 18px; }
.view-btn svg { margin: 0 2px; }
figure { position: relative; width: 190px; height: 138px; padding: 2px 0 0 10px; }
figcaption, .base { display: flex; justify-content: space-between; width: 168px; line-height: 18px; margin-left: 2px; }
figcaption { height: 19px; }
.base { height: 15px; }
.graph { display: block; }
.bracket { position: absolute; right: 0; top: 10px; width: 6px; height: 124px; }
.wide .vthumb { height: 314px; margin-top: 4px; margin-bottom: auto; }
```
